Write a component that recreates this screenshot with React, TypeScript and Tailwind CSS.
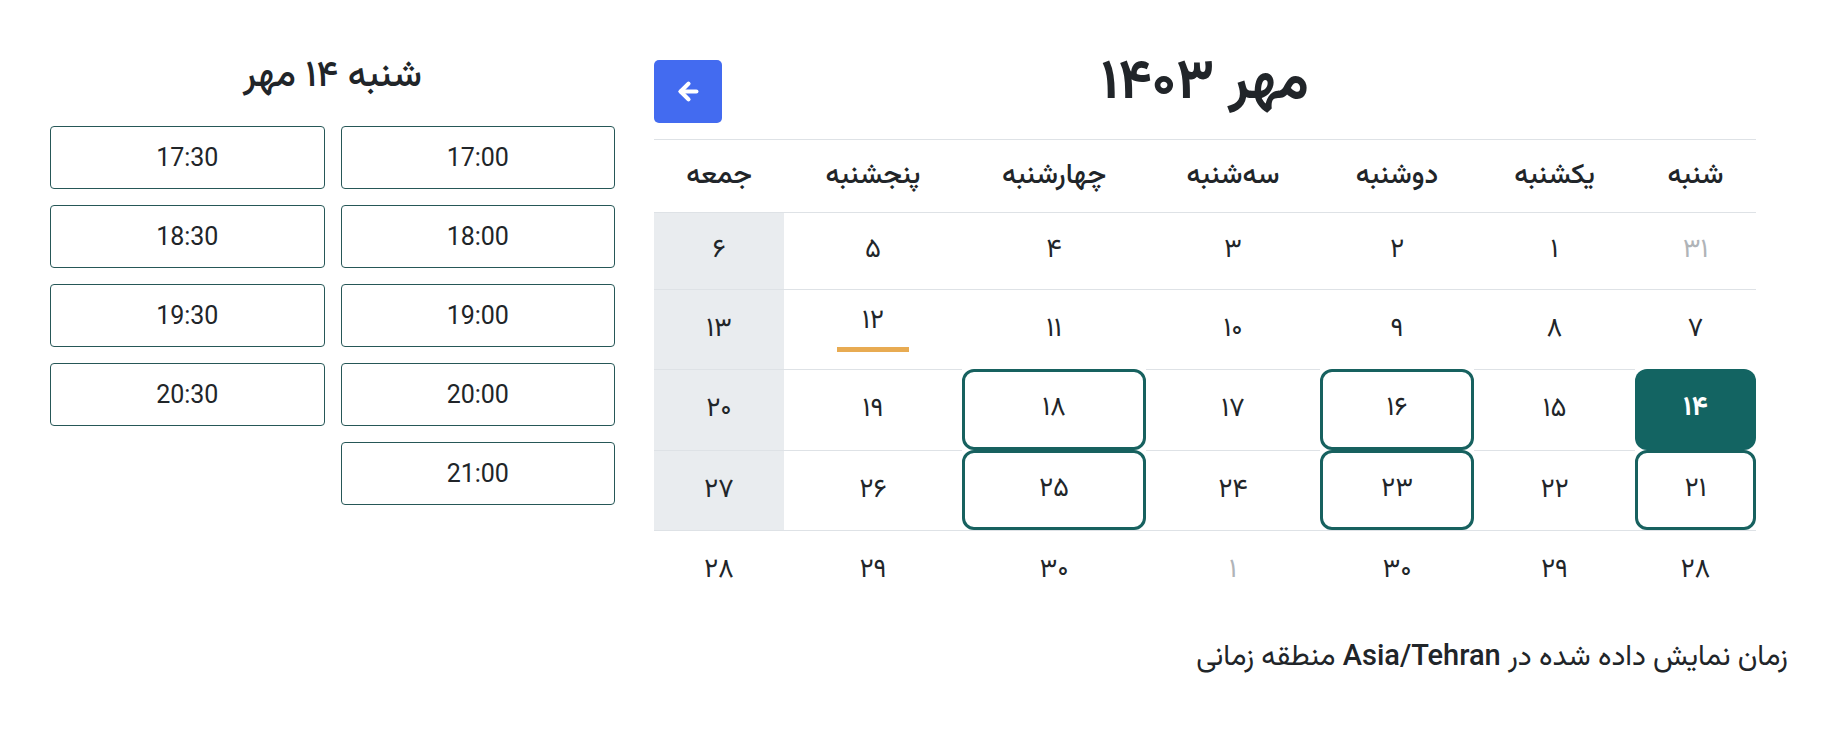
import { ArrowLeft } from "lucide-react";

type Day = { d: string; muted?: boolean; state?: "selected" | "open" | "today" };

const weekdays = ["شنبه", "یکشنبه", "دوشنبه", "سه‌شنبه", "چهارشنبه", "پنجشنبه", "جمعه"];

const weeks: Day[][] = [
  [{ d: "۳۱", muted: true }, { d: "۱" }, { d: "۲" }, { d: "۳" }, { d: "۴" }, { d: "۵" }, { d: "۶" }],
  [{ d: "۷" }, { d: "۸" }, { d: "۹" }, { d: "۱۰" }, { d: "۱۱" }, { d: "۱۲", state: "today" }, { d: "۱۳" }],
  [{ d: "۱۴", state: "selected" }, { d: "۱۵" }, { d: "۱۶", state: "open" }, { d: "۱۷" }, { d: "۱۸", state: "open" }, { d: "۱۹" }, { d: "۲۰" }],
  [{ d: "۲۱", state: "open" }, { d: "۲۲" }, { d: "۲۳", state: "open" }, { d: "۲۴" }, { d: "۲۵", state: "open" }, { d: "۲۶" }, { d: "۲۷" }],
  [{ d: "۲۸" }, { d: "۲۹" }, { d: "۳۰" }, { d: "۱", muted: true }, { d: "۳۰" }, { d: "۲۹" }, { d: "۲۸" }],
];

const rowHeights = ["h-[77px]", "h-[80px]", "h-[81px]", "h-[80px]", "h-[80px]"];

const slots = ["17:00", "17:30", "18:00", "18:30", "19:00", "19:30", "20:00", "20:30", "21:00"];

function DayCell({ day, friday, last, h }: { day: Day; friday: boolean; last: boolean; h: string }) {
  if (day.state === "selected") {
    return (
      <div className={`${h} flex items-center justify-center rounded-[12px] bg-[#136462] text-white font-bold`}>
        {day.d}
      </div>
    );
  }
  if (day.state === "open") {
    return (
      <div className={`${h} flex items-center justify-center rounded-[12px] border-[3px] border-[#17615f] bg-white`}>
        {day.d}
      </div>
    );
  }
  const bg = friday && !last ? "bg-[#e9ecef]" : "bg-white";
  return (
    <div className={`${h} flex flex-col items-center justify-center border-t border-[#dee2e6] ${bg} ${day.muted ? "text-[#b0b4b8]" : ""}`}>
      <span className="leading-[30px]">{day.d}</span>
      {day.state === "today" && <span className="mt-[10px] block h-[5px] w-[72px] bg-[#e8ab52]" />}
    </div>
  );
}

export default function App() {
  return (
    <div dir="rtl" className="min-h-screen bg-white pt-[60px] pl-[50px] pr-[60px] text-[#212529] font-['Vazirmatn','Noto_Sans_Arabic','DejaVu_Sans',sans-serif]">
      <div className="flex items-start gap-[39px]">
        {/* Calendar */}
        <div className="mr-[32px] w-[1102px] shrink-0">
          <div className="mb-[16px] grid h-[63px] grid-cols-[68px_1fr_68px] items-center">
            <div />
            <h1 className="-mt-[14px] text-center text-[56px] font-bold leading-[60px]">مهر ۱۴۰۳</h1>
            <button className="flex h-[63px] w-[68px] items-center justify-center rounded-[5px] bg-[#436bf0] text-white">
              <ArrowLeft className="h-[27px] w-[27px]" strokeWidth={3.75} />
            </button>
          </div>

          <div className="grid grid-cols-[121px_161px_154px_174px_184px_178px_130px] text-[27px]">
            {weekdays.map((w) => (
              <div key={w} className="flex h-[73px] items-center justify-center border-t border-[#dee2e6] text-[28px] font-medium">
                {w}
              </div>
            ))}
            {weeks.map((week, wi) =>
              week.map((day, di) => (
                <DayCell key={`${wi}-${di}`} day={day} friday={di === 6} last={wi === weeks.length - 1} h={rowHeights[wi]} />
              ))
            )}
          </div>
        </div>

        {/* Time slots */}
        <div className="w-[565px] shrink-0">
          <h2 className="-mt-[3px] mb-[29px] text-center text-[37px] font-medium leading-[40px]">شنبه ۱۴ مهر</h2>
          <div className="grid grid-cols-2 gap-[16px]">
            {slots.map((s) => (
              <button
                key={s}
                className="flex h-[63px] items-center justify-center rounded-[4px] border border-[#265757] bg-white text-[25px] font-['Roboto',sans-serif] text-[#212529]"
              >
                {s}
              </button>
            ))}
          </div>
        </div>
      </div>

      <p className="mt-[30px] text-[29px] leading-[30px] font-['Roboto','Vazirmatn','Noto_Sans_Arabic','DejaVu_Sans',sans-serif]">
        زمان نمایش داده شده در <span className="font-medium">Asia/Tehran</span> منطقه زمانی
      </p>
    </div>
  );
}
